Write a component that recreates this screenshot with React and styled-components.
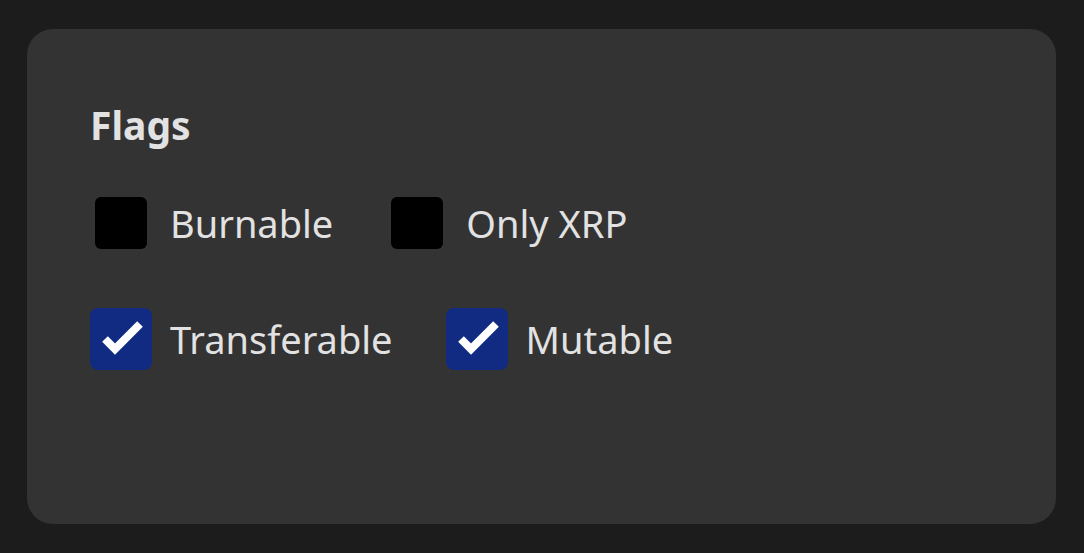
import React from "react";
import styled, { createGlobalStyle } from "styled-components";

const GlobalStyle = createGlobalStyle`
  html, body {
    margin: 0;
    padding: 0;
    background: #1c1c1c;
    font-family: "Noto Sans", "Open Sans", sans-serif;
  }
`;

const Page = styled.div`
  padding: 29px 0 0 27px;
`;

const Card = styled.section`
  box-sizing: border-box;
  width: 1029px;
  height: 495px;
  background: #333333;
  border-radius: 26px;
  padding: 70px 64px 0 63px;
  color: #e2e2e2;
`;

const Title = styled.h2`
  margin: 0 0 41px 0;
  font-size: 39px;
  line-height: 52px;
  font-weight: 700;
`;

const Row = styled.div`
  display: flex;
  align-items: center;
  gap: 53px;
  margin-bottom: 54px;
`;

const Option = styled.label`
  display: flex;
  align-items: center;
  gap: 18px;
  font-size: 38px;
  line-height: 62px;
`;

const Box = styled.span`
  box-sizing: border-box;
  flex: none;
  width: 62px;
  height: 62px;
  display: flex;
  align-items: center;
  justify-content: center;
  border-radius: 8px;
  background: ${(p) => (p.checked ? "#112b82" : "transparent")};
  &::before {
    content: "";
    display: ${(p) => (p.checked ? "none" : "block")};
    width: 52px;
    height: 52px;
    border-radius: 6px;
    background: #000;
  }
`;

const Check = () => (
  <svg width="62" height="62" viewBox="0 0 62 62">
    <path
      d="M15 31 L25 41 L50 16"
      fill="none"
      stroke="#fff"
      strokeWidth="8"
      strokeLinecap="butt"
    />
  </svg>
);

const Flag = ({ label, checked }) => (
  <Option>
    <Box checked={checked}>{checked && <Check />}</Box>
    {label}
  </Option>
);

export default function App() {
  return (
    <>
      <GlobalStyle />
      <Page>
        <Card>
          <Title>Flags</Title>
          <Row>
            <Flag label="Burnable" />
            <Flag label="Only XRP" />
          </Row>
          <Row>
            <Flag label="Transferable" checked />
            <Flag label="Mutable" checked />
          </Row>
        </Card>
      </Page>
    </>
  );
}
